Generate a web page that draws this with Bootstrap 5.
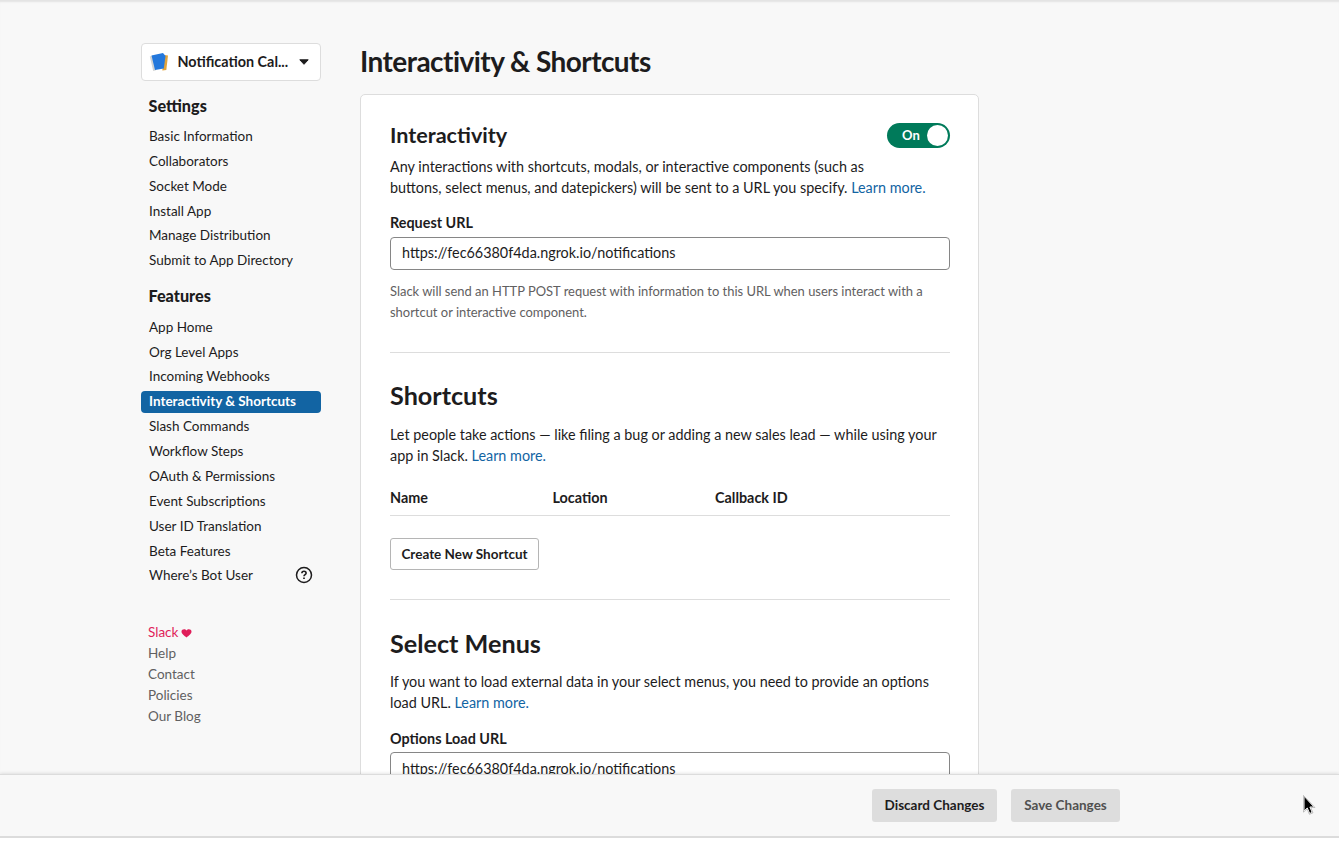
<!DOCTYPE html>
<html lang="en">
<head>
<meta charset="utf-8">
<title>Interactivity &amp; Shortcuts</title>
<meta name="viewport" content="width=device-width, initial-scale=1">
<link href="https://cdn.jsdelivr.net/npm/bootstrap@5.3.0/dist/css/bootstrap.min.css" rel="stylesheet">
<style>
body{font-family:Lato,"Liberation Sans",sans-serif;font-size:14.39px;line-height:21px;color:#1d1c1d;background:#fff;height:841px;overflow:hidden}
a{color:#1264a3;text-decoration:none}
.app-frame{height:838px;background:#f8f8f8;border-bottom:2px solid #dcdcdc;overflow:hidden}
.app-scroll{height:774px;overflow:hidden;padding-left:141px;gap:39px;box-shadow:inset 0 3px 2px -1px #e3e3e3}
.side-col{width:180px;padding-top:43px}
.app-picker{height:38px;background:#fff;border:1px solid #dddddd;border-radius:4px;font-weight:700;padding:0 11px 1px 7px}
.app-picker .app-name{margin-left:8.5px;width:113px;white-space:nowrap}
.side-title{font-size:16.2px;font-weight:900;line-height:20px;padding-left:7.5px;margin:0}
.side-list .nav-link{font-size:13.5px;line-height:22px;height:22px;padding:0 8px;margin-bottom:2.86px;color:#1d1c1d;border-radius:4px}
.side-list .nav-link.active{background:#1264a3;color:#fff;font-weight:700;line-height:20px;margin-top:1px;margin-bottom:1.86px}
.foot-links{font-size:13.5px;line-height:21px;padding-left:7px;margin-top:33px}
.foot-links a{color:#616061}
.foot-links a.brand-link{color:#e01e5a}
.main-col{width:619px;padding-top:42px}
.page-title{font-size:28px;line-height:38px;font-weight:700;letter-spacing:-.55px;margin:0 0 14px}
.panel{border:1px solid #dddddd;border-radius:5px;padding:0 28px 0 29px;height:800px;background:#fff}
.h-small{font-size:21.6px;line-height:28px;font-weight:700;margin:0}
.h-big{font-size:25.2px;line-height:32px;font-weight:700;margin:0}
.toggle-on{width:63px;height:25px;border-radius:13px;background:#007a5a;color:#fff;font-size:13px;font-weight:700;padding:0 2px 0 15px}
.toggle-on i{width:21px;height:21px;border-radius:50%;background:#fff}
.field-label{font-weight:700;line-height:21px}
.url-field{height:33px;border:1px solid #868686;border-radius:4px;padding:0 11px;line-height:30px;color:#1d1c1d;background:#fff}
.url-field.low{line-height:32px}
.hint{font-size:12.94px;line-height:21px;color:#616061}
.rule{height:1px;background:#dddddd}
.head-row{font-weight:700;border-bottom:1px solid #dddddd;height:29px}
.head-row span{width:162.5px}
.btn-line{height:32px;width:149px;border:1px solid #b5b5b5;border-radius:3px;font-size:13.5px;font-weight:700;padding:0;color:#1d1c1d;background:#fff}
.save-bar{height:62px;border-top:1px solid #dcdcdc;box-shadow:0 -1px 3px rgba(0,0,0,.1);background:#f8f8f8;position:relative;padding:14px 0 0 872px;gap:14px}
.btn-flat{height:33px;border:0;border-radius:3px;background:#ddd;font-size:13.5px;font-weight:700;padding:0;color:#1d1c1d}
.btn-flat.dim{color:#505050}
.pointer{position:absolute;left:1303px;top:20px}
</style>
</head>
<body>
<div class="app-frame">
  <div class="app-scroll d-flex">
    <aside class="side-col flex-shrink-0">
      <div class="app-picker d-flex align-items-center">
        <svg width="20" height="20" viewBox="0 0 20 20"><path d="M.8 4.500 4 3.500l3 14.700-2.800.8z" fill="#d2d4d4"/><path d="m15.500 3 3.500.5L17.300 18l-4 .5z" fill="#e2a43c"/><path d="M2.500 3.500 14 1l2.500 3-1.700 12.500-8.800 1.500z" fill="#2478dc"/></svg>
        <span class="app-name">Notification Cal...</span>
        <svg class="ms-auto" width="10" height="7" viewBox="0 0 10 7"><path d="M.8 1.800h8.400L5 6.300z" fill="#1d1c1d" stroke="#1d1c1d" stroke-linejoin="round"/></svg>
      </div>
      <h2 class="side-title" style="margin-top:15px">Settings</h2>
      <nav class="nav flex-column flex-nowrap side-list" style="margin-top:9px">
        <a class="nav-link" href="#">Basic Information</a>
        <a class="nav-link" href="#">Collaborators</a>
        <a class="nav-link" href="#">Socket Mode</a>
        <a class="nav-link" href="#">Install App</a>
        <a class="nav-link" href="#">Manage Distribution</a>
        <a class="nav-link" href="#">Submit to App Directory</a>
      </nav>
      <h2 class="side-title" style="margin-top:12px">Features</h2>
      <nav class="nav flex-column flex-nowrap side-list" style="margin-top:9.61px">
        <a class="nav-link" href="#">App Home</a>
        <a class="nav-link" href="#">Org Level Apps</a>
        <a class="nav-link" href="#">Incoming Webhooks</a>
        <a class="nav-link active" href="#">Interactivity &amp; Shortcuts</a>
        <a class="nav-link" href="#">Slash Commands</a>
        <a class="nav-link" href="#">Workflow Steps</a>
        <a class="nav-link" href="#">OAuth &amp; Permissions</a>
        <a class="nav-link" href="#">Event Subscriptions</a>
        <a class="nav-link" href="#">User ID Translation</a>
        <a class="nav-link" href="#">Beta Features</a>
        <a class="nav-link d-flex justify-content-between align-items-center" href="#">Where’s Bot User
          <svg width="18" height="18" viewBox="0 0 18 18" fill="none" stroke="#1d1c1d"><circle cx="9" cy="9" r="7.500" stroke-width="1.500"/><path d="M6.900 7.300c0-1.300.9-2 2.100-2s2.100.8 2.100 1.900c0 1.400-2.100 1.500-2.100 3.100" stroke-width="1.600"/><path d="M9 11.400v1.700" stroke-width="1.700"/></svg></a>
      </nav>
      <div class="foot-links d-flex flex-column">
        <a class="brand-link d-flex align-items-center" href="#">Slack
          <svg style="margin:1px 0 0 3px" width="11" height="10" viewBox="0 0 11 10"><path d="M5.500 9.400C3.500 8 .5 6 .5 3.500.5 1 4.200.3 5.500 2.500 6.800.3 10.500 1 10.500 3.500 10.500 6 7.500 8 5.500 9.400z" fill="#e01e5a"/></svg></a>
        <a href="#">Help</a><a href="#">Contact</a><a href="#">Policies</a><a href="#">Our Blog</a>
      </div>
    </aside>
    <main class="main-col flex-shrink-0">
      <h1 class="page-title">Interactivity &amp; Shortcuts</h1>
      <section class="panel">
        <div class="d-flex justify-content-between align-items-center" style="padding-top:26px">
          <h2 class="h-small">Interactivity</h2>
          <div class="toggle-on d-flex justify-content-between align-items-center"><span>On</span><i></i></div>
        </div>
        <p class="mb-0" style="margin-top:7px">Any interactions with shortcuts, modals, or interactive components (such as<br>buttons, select menus, and datepickers) will be sent to a URL you specify. <a href="#">Learn more.</a></p>
        <div class="field-label" style="margin-top:14px">Request URL</div>
        <div class="url-field" style="margin-top:4px">https://fec66380f4da.ngrok.io/notifications</div>
        <p class="hint mb-0" style="margin-top:11px">Slack will send an HTTP POST request with information to this URL when users interact with a<br>shortcut or interactive component.</p>
        <div class="rule" style="margin-top:29px"></div>
        <h2 class="h-big" style="margin-top:26px">Shortcuts</h2>
        <p class="mb-0" style="margin-top:13px">Let people take actions — like filing a bug or adding a new sales lead — while using your<br>app in Slack. <a href="#">Learn more.</a></p>
        <div class="head-row d-flex" style="margin-top:21px"><span>Name</span><span>Location</span><span>Callback ID</span></div>
        <button class="btn btn-line d-block" style="margin-top:22px">Create New Shortcut</button>
        <div class="rule" style="margin-top:29px"></div>
        <h2 class="h-big" style="margin-top:27px">Select Menus</h2>
        <p class="mb-0" style="margin-top:12px">If you want to load external data in your select menus, you need to provide an options<br>load URL. <a href="#">Learn more.</a></p>
        <div class="field-label" style="margin-top:15px">Options Load URL</div>
        <div class="url-field low" style="margin-top:3px">https://fec66380f4da.ngrok.io/notifications</div>
      </section>
    </main>
  </div>
  <footer class="save-bar d-flex">
    <button class="btn btn-flat" style="width:125px">Discard Changes</button>
    <button class="btn btn-flat dim" style="width:109px">Save Changes</button>
    <svg class="pointer" width="13" height="22" viewBox="0 0 13 22"><path d="M1 1v15l3.300-3 2.400 5.500 2.500-1.100L6.900 12H11z" fill="#000" stroke="#fff"/><path d="M.5.500v16.600l3.600-3.300 2.300 5.500 3.600-1.500L7.700 12.500h4.200z" fill="none" stroke="#888" stroke-width=".5"/></svg>
  </footer>
</div>
<script src="https://cdn.jsdelivr.net/npm/bootstrap@5.3.0/dist/js/bootstrap.bundle.min.js"></script>
</body>
</html>
